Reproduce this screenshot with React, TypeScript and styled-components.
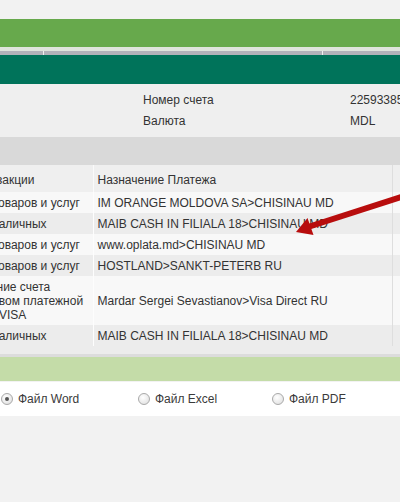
import styled, { createGlobalStyle } from 'styled-components';

const GlobalStyle = createGlobalStyle`
  body {
    margin: 0;
    background: #f2f2f2;
    font-family: 'Liberation Sans', Arial, sans-serif;
    font-size: 12px;
    color: #333;
    overflow: hidden;
  }
`;

const rows = [
  { type: 'Оплата товаров и услуг', purpose: 'IM ORANGE MOLDOVA SA>CHISINAU MD', sum: '-150.00' },
  { type: 'Снятие наличных', purpose: 'MAIB CASH IN FILIALA 18>CHISINAU MD', sum: '-500.00' },
  { type: 'Оплата товаров и услуг', purpose: 'www.oplata.md>CHISINAU MD', sum: '-84.00' },
  { type: 'Оплата товаров и услуг', purpose: 'HOSTLAND>SANKT-PETERB RU', sum: '-62.17' },
  {
    type: 'Пополнение счета\nпосредством платежной\nсистемы VISA',
    purpose: 'Mardar Sergei Sevastianov>Visa Direct RU',
    sum: '1000.00',
  },
  { type: 'Снятие наличных', purpose: 'MAIB CASH IN FILIALA 18>CHISINAU MD', sum: '-300.00' },
];

const formats = ['Файл Word', 'Файл Excel', 'Файл PDF'];

const App = () => {
  return (
    <Page>
      <GlobalStyle />
      <GreenBar />
      <LightStrip />
      <TabLine>
        <Tab $w={44} />
        <Tab $w={279} />
        <Tab $w={77} />
      </TabLine>
      <TealBar />

      <InfoBlock>
        <InfoRow>
          <span />
          <span>Номер счета</span>
          <span>225933859</span>
        </InfoRow>
        <InfoRow>
          <span />
          <span>Валюта</span>
          <span>MDL</span>
        </InfoRow>
      </InfoBlock>
      <GrayBand />

      <TableWrap>
        <Table>
          <colgroup>
            <col style={{ width: 149 }} />
            <col style={{ width: 299 }} />
            <col />
          </colgroup>
          <thead>
            <tr>
              <HeadCell>Тип транзакции</HeadCell>
              <HeadCell>Назначение Платежа</HeadCell>
              <HeadCell>Сумма</HeadCell>
            </tr>
          </thead>
          <tbody>
            {rows.map((r, i) => (
              <Row key={i} $odd={i % 2 === 0}>
                <Cell>{r.type}</Cell>
                <Cell>{r.purpose}</Cell>
                <Cell>{r.sum}</Cell>
              </Row>
            ))}
          </tbody>
        </Table>
      </TableWrap>

      <Spacer />
      <Divider />
      <LightGreenBand />

      <RadioRow>
        {formats.map((f, i) => (
          <RadioOption key={f}>
            <Radio $checked={i === 0} />
            {f}
          </RadioOption>
        ))}
      </RadioRow>

      <Arrow width="112" height="54" viewBox="0 0 112 54">
        <line x1="114" y1="8" x2="18" y2="39" stroke="#b80d0d" strokeWidth="6" />
        <polygon points="6,44 17.5,30 23.5,47" fill="#b80d0d" />
      </Arrow>
    </Page>
  );
};

export default App;

const Page = styled.div`
  position: relative;
  width: 400px;
  height: 502px;
  overflow: hidden;
  padding-top: 19px;
  box-sizing: border-box;
`;

const GreenBar = styled.div`
  height: 28px;
  background: #67a94c;
`;

const LightStrip = styled.div`
  height: 4px;
  background: #dfe4dc;
`;

const TabLine = styled.div`
  display: flex;
  height: 4px;
  background: #b2b2b9;
`;

const Tab = styled.div<{ $w: number }>`
  width: ${(p) => p.$w}px;
  border-right: 1px solid #f0f0f0;
  box-sizing: border-box;
  &:last-child {
    border-right: none;
  }
`;

const TealBar = styled.div`
  height: 29px;
  background: #00735a;
`;

const InfoBlock = styled.div`
  background: #efefef;
  padding: 6px 0 5px;
`;

const InfoRow = styled.div`
  display: grid;
  grid-template-columns: 143px 207px 1fr;
  height: 21px;
  line-height: 21px;
  white-space: nowrap;
`;

const GrayBand = styled.div`
  height: 28px;
  background: #d9d9d9;
`;

const TableWrap = styled.div`
  margin-left: -56px;
`;

const Table = styled.table`
  border-collapse: collapse;
  table-layout: fixed;
  width: 530px;
`;

const HeadCell = styled.th`
  background: #efefef;
  font-weight: normal;
  text-align: left;
  height: 24px;
  padding: 3px 4px 0;
  line-height: 14px;
  white-space: nowrap;
  overflow: hidden;
  &:nth-child(2) {
    border-left: 1px solid #fafafa;
    border-right: 1px solid #dedede;
  }
  &:nth-child(3) {
    text-align: right;
  }
`;

const Row = styled.tr<{ $odd: boolean }>`
  background: ${(p) => (p.$odd ? '#f8f8f8' : '#ececec')};
`;

const Cell = styled.td`
  padding: 4px 4px 3px;
  line-height: 14px;
  white-space: pre-line;
  vertical-align: middle;
  overflow: hidden;
  &:nth-child(2) {
    white-space: nowrap;
    border-left: 1px solid #fdfdfd;
    border-right: 1px solid #dedede;
  }
  &:nth-child(3) {
    text-align: right;
  }
`;

const Spacer = styled.div`
  height: 8px;
  background: #ececec;
`;

const Divider = styled.div`
  height: 3px;
  background: #dcdcdc;
`;

const LightGreenBand = styled.div`
  height: 24px;
  background: #c4dca8;
`;

const RadioRow = styled.div`
  display: grid;
  grid-template-columns: 137px 134px 1fr;
  align-items: center;
  height: 34px;
  padding-left: 1px;
  margin-top: 1px;
  background: #fff;
  font-size: 12px;
  color: #3a3a3a;
`;

const RadioOption = styled.label`
  display: flex;
  align-items: center;
  gap: 5px;
  white-space: nowrap;
`;

const Radio = styled.span<{ $checked: boolean }>`
  position: relative;
  width: 12px;
  height: 12px;
  border-radius: 50%;
  border: 1px solid #a9a9a9;
  box-sizing: border-box;
  background: radial-gradient(circle at 40% 35%, #ffffff, #dcdcdc);
  &::after {
    content: '';
    display: ${(p) => (p.$checked ? 'block' : 'none')};
    position: absolute;
    left: 3px;
    top: 3px;
    width: 4px;
    height: 4px;
    border-radius: 50%;
    background: #555;
  }
`;

const Arrow = styled.svg`
  position: absolute;
  left: 290px;
  top: 188px;
`;
